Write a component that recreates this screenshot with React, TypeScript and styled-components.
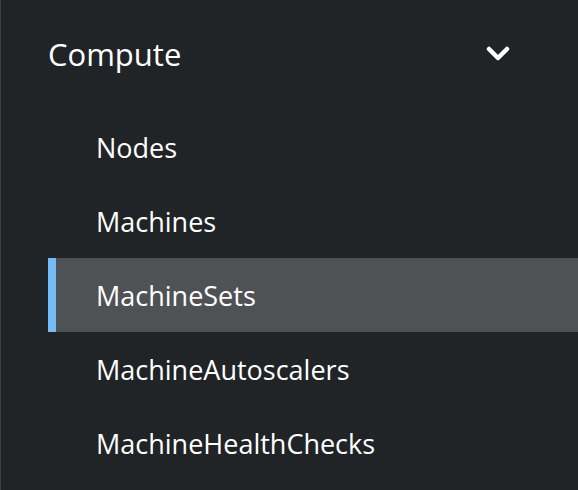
import React from "react";
import styled, { createGlobalStyle } from "styled-components";

const Global = createGlobalStyle`
  html, body { margin: 0; padding: 0; background: #212427; }
  body { font-family: "Open Sans", "Liberation Sans", sans-serif; }
`;

const Nav = styled.nav`
  width: 578px;
  height: 490px;
  background: #212427;
  border-left: 1px solid #3c3f42;
  box-sizing: border-box;
  overflow: hidden;
`;

const Section = styled.div`
  display: flex;
  flex-direction: column;
`;

const Header = styled.div`
  display: flex;
  align-items: center;
  justify-content: space-between;
  height: 110px;
  padding: 0 68px 0 47px;
  color: #fff;
  font-size: 31px;
  font-weight: 400;
  padding-bottom: 2px;
  box-sizing: border-box;
`;

const List = styled.ul`
  list-style: none;
  margin: 0;
  padding: 0;
  display: flex;
  flex-direction: column;
`;

const Item = styled.li<{ $active?: boolean }>`
  display: flex;
  align-items: center;
  height: 74px;
  margin-left: 47px;
  padding-left: 48px;
  color: #fff;
  font-size: 27px;
  background: ${(p) => (p.$active ? "#4f5255" : "transparent")};
  box-shadow: ${(p) => (p.$active ? "inset 8px 0 0 #73bcf7" : "none")};
`;

const Chevron = () => (
  <svg width="24" height="16" viewBox="0 0 24 16">
    <path d="M3 3 L12 12 L21 3" fill="none" stroke="#fff" strokeWidth="4.5" strokeLinecap="round" strokeLinejoin="round" />
  </svg>
);

const items = ["Nodes", "Machines", "MachineSets", "MachineAutoscalers", "MachineHealthChecks"];

export default function App() {
  return (
    <>
      <Global />
      <Nav>
        <Section>
          <Header>
            <span>Compute</span>
            <Chevron />
          </Header>
          <List>
            {items.map((i) => (
              <Item key={i} $active={i === "MachineSets"}>{i}</Item>
            ))}
          </List>
        </Section>
      </Nav>
    </>
  );
}
